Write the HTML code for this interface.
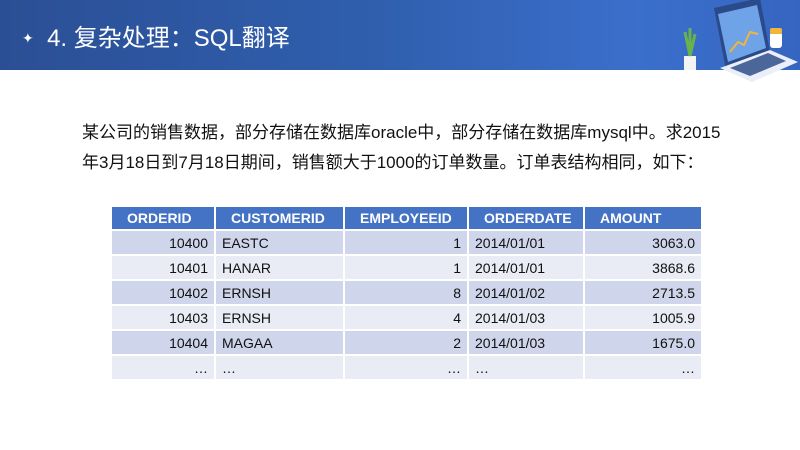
<!DOCTYPE html>
<html><head><meta charset="utf-8"><style>
body{margin:0;width:800px;height:450px;background:#fff;position:relative;overflow:hidden;font-family:"Liberation Sans","Noto Sans CJK SC",sans-serif}
.hdr{position:absolute;left:0;top:0;width:800px;height:70px;background:linear-gradient(90deg,#2b4f95 0%,#3060b0 50%,#3b6fcc 80%,#3565c0 100%)}
.title{position:absolute;left:22px;top:18px;color:#fff;font-size:24px;white-space:nowrap}
.p{position:absolute;left:82px;top:118px;font-size:17px;line-height:30px;color:#111;width:650px}
table{position:absolute;left:110px;top:205px;border-collapse:collapse;font-size:14px;color:#111;table-layout:fixed;width:591px}
td,th{border:2px solid #fff;padding:0 6px;height:23px}
th{background:#4472c4;color:#fff;font-weight:bold;text-align:left;padding-left:15px;height:22px}
tr.o td{background:#cfd5ea}tr.e td{background:#e9ebf5}
.r{text-align:right}
</style></head><body>
<div class="hdr"></div>
<div class="title"><span style="font-size:14px;position:relative;top:-3px">✦</span>&nbsp; 4. 复杂处理：SQL翻译</div>
<svg style="position:absolute;left:670px;top:0" width="130" height="82" viewBox="0 0 130 82">
<rect x="14" y="56" width="12" height="14" fill="#f3f3f3"/>
<path d="M20 56 L15 32 M20 56 L20 28 M20 56 L25 34" stroke="#69b34c" stroke-width="3"/>
<polygon points="44,8 90,-2 100,52 56,70" fill="#2a4a8a"/>
<polygon points="48,14 87,5 96,48 58,62" fill="#6fa3e8"/>
<polyline points="60,52 68,42 74,45 80,32 88,34" stroke="#f2b43a" stroke-width="2" fill="none"/>
<polygon points="50,68 100,50 128,62 82,82" fill="#e9eef8"/>
<polygon points="60,68 98,53 116,61 80,76" fill="#2f4f8a" opacity=".85"/>
<rect x="100" y="32" width="12" height="16" rx="3" fill="#fff"/>
<rect x="100" y="28" width="12" height="6" rx="2" fill="#f2b43a"/>
</svg>
<div class="p">某公司的销售数据，部分存储在数据库oracle中，部分存储在数据库mysql中。求2015年3月18日到7月18日期间，销售额大于1000的订单数量。订单表结构相同，如下：</div>
<table>
<colgroup><col style="width:104px"><col style="width:129px"><col style="width:124px"><col style="width:116px"><col style="width:118px"></colgroup>
<tr><th>ORDERID</th><th>CUSTOMERID</th><th>EMPLOYEEID</th><th>ORDERDATE</th><th>AMOUNT</th></tr>
<tr class="o"><td class="r">10400</td><td>EASTC</td><td class="r">1</td><td>2014/01/01</td><td class="r">3063.0</td></tr>
<tr class="e"><td class="r">10401</td><td>HANAR</td><td class="r">1</td><td>2014/01/01</td><td class="r">3868.6</td></tr>
<tr class="o"><td class="r">10402</td><td>ERNSH</td><td class="r">8</td><td>2014/01/02</td><td class="r">2713.5</td></tr>
<tr class="e"><td class="r">10403</td><td>ERNSH</td><td class="r">4</td><td>2014/01/03</td><td class="r">1005.9</td></tr>
<tr class="o"><td class="r">10404</td><td>MAGAA</td><td class="r">2</td><td>2014/01/03</td><td class="r">1675.0</td></tr>
<tr class="e"><td class="r">…</td><td>…</td><td class="r">…</td><td>…</td><td class="r">…</td></tr>
</table>
</body></html>
